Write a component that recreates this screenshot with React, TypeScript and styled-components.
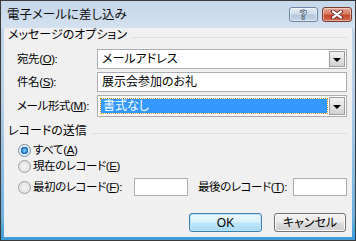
import React from "react";
import styled, { createGlobalStyle } from "styled-components";

const Global = createGlobalStyle`
  html, body { margin: 0; padding: 0; background: #ffffff; }
  body {
    font-family: "Liberation Sans", "Noto Sans CJK JP", sans-serif;
    font-size: 12px;
    font-feature-settings: "palt" 1;
    color: #000;
    white-space: nowrap;
  }
  u { text-decoration-thickness: 1px; text-underline-offset: 1px; }
`;

const Window = styled.div`
  width: 356px;
  height: 241px;
  box-sizing: border-box;
  border: 1px solid #3a3a3a;
  background: linear-gradient(#c6d9ec 0%, #b8d0e8 40%, #6fb1e0 90%, #3f9bd8 100%);
  display: flex;
  flex-direction: column;
`;

const TitleBar = styled.div`
  height: 27px;
  flex: none;
  display: flex;
  align-items: center;
  padding: 0 3px 0 6px;
  background: linear-gradient(#c4d7eb, #d3e1f0);
`;

const Title = styled.div`
  flex: 1;
  font-size: 12.5px;
  line-height: 16px;
  color: #0b0b0b;
`;

const CapButton = styled.div<{ $close?: boolean }>`
  width: ${(p) => (p.$close ? 30 : 29)}px;
  height: 15px;
  box-sizing: border-box;
  margin-left: ${(p) => (p.$close ? 4 : 0)}px;
  border: 1px solid ${(p) => (p.$close ? "#7a3a2e" : "#6d86a3")};
  border-radius: 3px;
  background: ${(p) =>
    p.$close
      ? "linear-gradient(#e8a898 0%, #d87a63 45%, #c4472b 55%, #d26a50 100%)"
      : "linear-gradient(#e4edf6 0%, #cddbea 45%, #b3c8de 55%, #c6d7ea 100%)"};
  box-shadow: inset 0 0 0 1px rgba(255, 255, 255, 0.45);
  display: flex;
  align-items: center;
  justify-content: center;
`;

const HelpGlyph = styled.span`
  font-family: "DejaVu Sans", sans-serif;
  font-weight: bold;
  font-size: 13px;
  line-height: 13px;
  color: #fff;
  -webkit-text-stroke: 0.8px #445a72;
`;

const Client = styled.div`
  flex: 1;
  margin: 0 3px 3px 3px;
  background: #f0f0f0;
  padding: 0 5px 0 4px;
  display: flex;
  flex-direction: column;
`;

const GroupHeader = styled.div<{ $top: number }>`
  display: flex;
  align-items: flex-start;
  gap: 5px;
  height: 14px;
  line-height: 14px;
  margin-top: ${(p) => p.$top}px;
  &::after {
    content: "";
    flex: 1;
    height: 1px;
    margin-top: 9px;
    background: #d5dfe5;
  }
`;

const Fields = styled.div`
  display: flex;
  flex-direction: column;
  gap: 3px;
  margin-top: 7px;
  padding-left: 9px;
`;

const FieldRow = styled.div<{ $h?: number }>`
  display: grid;
  grid-template-columns: 80px 1fr;
  align-items: center;
  height: ${(p) => p.$h ?? 20}px;
`;

const Label = styled.span`
  font-size: 11.5px;
  letter-spacing: -0.4px;
  line-height: 14px;
`;

const Box = styled.div`
  height: 100%;
  box-sizing: border-box;
  border: 1px solid #abadb3;
  background: #fff;
  display: flex;
  align-items: center;
  padding: 1px;
  line-height: 14px;
`;

const BoxText = styled.span`
  flex: 1;
  padding-left: 3px;
`;

const Highlight = styled.span`
  flex: 1;
  align-self: stretch;
  margin: 2px;
  padding-left: 2px;
  background: #3399ff;
  color: #fff;
  outline: 1px dotted #d08a2a;
  display: flex;
  align-items: center;
`;

const DropButton = styled.div`
  width: 16px;
  align-self: stretch;
  box-sizing: border-box;
  border: 1px solid #9c9c9c;
  background: linear-gradient(#f4f4f4, #e2e2e2 50%, #d2d2d2);
  display: flex;
  align-items: center;
  justify-content: center;
  &::after {
    content: "";
    border-left: 4px solid transparent;
    border-right: 4px solid transparent;
    border-top: 4px solid #000;
    margin-top: 1px;
  }
`;

const Radios = styled.div`
  display: flex;
  flex-direction: column;
  padding-left: 10px;
  margin-top: 4px;
`;

const RadioRow = styled.div<{ $h?: number; $top?: number }>`
  display: flex;
  align-items: center;
  height: ${(p) => p.$h ?? 16}px;
  margin-top: ${(p) => p.$top ?? 0}px;
  line-height: 14px;
`;

const Radio = styled.span<{ $on?: boolean }>`
  width: 13px;
  height: 13px;
  box-sizing: border-box;
  border-radius: 50%;
  border: 1px solid ${(p) => (p.$on ? "#6f8fb0" : "#9aa0a6")};
  background: radial-gradient(circle at 50% 50%,
    ${(p) =>
      p.$on
        ? "#9fd8ff 0, #3a94dc 2px, #1d5fa8 3.5px, #e9eef3 4px, #dfe3e7 100%"
        : "#f5f5f5 0, #e6e6e6 60%, #d4d4d4 100%"});
  margin-right: 2px;
  flex: none;
`;

const RadioLabel = styled(Label)<{ $w?: number; $gap?: number }>`
  width: ${(p) => (p.$w ? `${p.$w}px` : "auto")};
  margin-left: ${(p) => p.$gap ?? 0}px;
  flex: none;
`;

const SmallBox = styled.div<{ $w?: number }>`
  height: 18px;
  box-sizing: border-box;
  width: ${(p) => (p.$w ? `${p.$w}px` : "auto")};
  flex: ${(p) => (p.$w ? "none" : "1")};
  border: 1px solid #abadb3;
  background: #fff;
`;

const Buttons = styled.div`
  display: flex;
  justify-content: flex-end;
  gap: 12px;
  margin-top: 17px;
  padding-right: 1px;
`;

const Button = styled.div<{ $def?: boolean; $w: number }>`
  width: ${(p) => p.$w}px;
  height: 19px;
  box-sizing: border-box;
  border: 1px solid ${(p) => (p.$def ? "#3c7fb1" : "#707070")};
  border-radius: 3px;
  background: ${(p) =>
    p.$def
      ? "linear-gradient(#eaf6fd 0%, #d9f0fc 48%, #bee6fd 52%, #a7d9f5 100%)"
      : "linear-gradient(#f2f2f2 0%, #ebebeb 48%, #dddddd 52%, #cfcfcf 100%)"};
  box-shadow: inset 0 0 0 1px ${(p) => (p.$def ? "#bde5fb" : "#fcfcfc")};
  display: flex;
  align-items: center;
  justify-content: center;
  line-height: 14px;
`;

export default function App() {
  return (
    <>
      <Global />
      <Window>
        <TitleBar>
          <Title>電子メールに差し込み</Title>
          <CapButton>
            <HelpGlyph>?</HelpGlyph>
          </CapButton>
          <CapButton $close>
            <svg width="14" height="9" viewBox="0 0 14 9">
              <path d="M3 1.5 L11 7.5 M11 1.5 L3 7.5" stroke="#5a1e14" strokeWidth="4" strokeLinecap="round" />
              <path d="M3 1.5 L11 7.5 M11 1.5 L3 7.5" stroke="#ffffff" strokeWidth="2.2" strokeLinecap="round" />
            </svg>
          </CapButton>
        </TitleBar>
        <Client>
          <GroupHeader $top={0}>メッセージのオプション</GroupHeader>
          <Fields>
            <FieldRow>
              <Label>
                宛先(<u>O</u>):
              </Label>
              <Box>
                <BoxText>メールアドレス</BoxText>
                <DropButton />
              </Box>
            </FieldRow>
            <FieldRow>
              <Label>
                件名(<u>S</u>):
              </Label>
              <Box>
                <BoxText>展示会参加のお礼</BoxText>
              </Box>
            </FieldRow>
            <FieldRow $h={21}>
              <Label>
                メール形式(<u>M</u>):
              </Label>
              <Box>
                <Highlight>書式なし</Highlight>
                <DropButton />
              </Box>
            </FieldRow>
          </Fields>
          <GroupHeader $top={8}>レコードの送信</GroupHeader>
          <Radios>
            <RadioRow>
              <Radio $on />
              <RadioLabel>
                すべて(<u>A</u>)
              </RadioLabel>
            </RadioRow>
            <RadioRow>
              <Radio />
              <RadioLabel>
                現在のレコード(<u>E</u>)
              </RadioLabel>
            </RadioRow>
            <RadioRow $h={18} $top={4}>
              <Radio />
              <RadioLabel $w={101}>
                最初のレコード(<u>F</u>):
              </RadioLabel>
              <SmallBox $w={54} />
              <RadioLabel $w={95} $gap={10}>
                最後のレコード(<u>T</u>):
              </RadioLabel>
              <SmallBox />
            </RadioRow>
          </Radios>
          <Buttons>
            <Button $def $w={73}>
              OK
            </Button>
            <Button $w={72}>キャンセル</Button>
          </Buttons>
        </Client>
      </Window>
    </>
  );
}
